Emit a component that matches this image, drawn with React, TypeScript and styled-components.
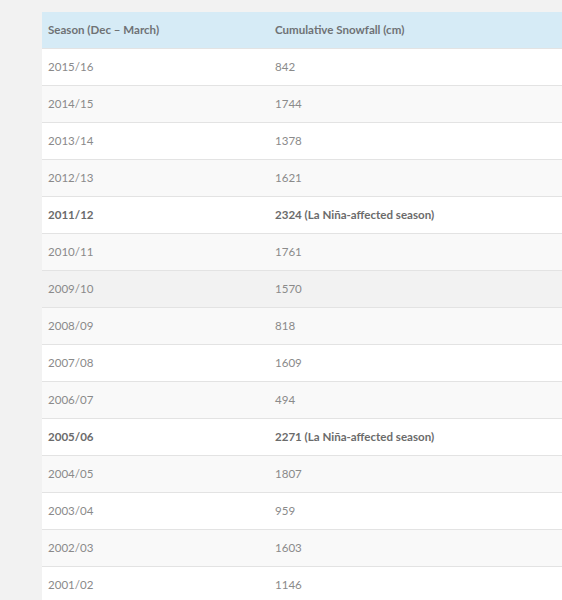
import React from "react";
import styled, { createGlobalStyle } from "styled-components";

const Global = createGlobalStyle`
  html, body { margin: 0; padding: 0; }
  body {
    background: #f2f2f2;
    font-family: Lato, "Open Sans", sans-serif;
    overflow: hidden;
  }
`;

const Page = styled.div`
  padding: 12px 0 0 42px;
  width: 620px;
`;

const Table = styled.table`
  width: 620px;
  table-layout: fixed;
  border-collapse: collapse;
  font-size: 11.55px;
  color: #888;
`;

const HeadCell = styled.th<{ $w?: number }>`
  background: #d6ebf6;
  color: #6f7275;
  font-weight: 700;
  text-align: left;
  height: 36px;
  padding: 0 6px;
  box-sizing: border-box;
  width: ${(p) => (p.$w ? `${p.$w}px` : "auto")};
`;

const Row = styled.tr<{ $bg: string }>`
  background: ${(p) => p.$bg};
  border-top: 1px solid #e3e3e3;
`;

const Cell = styled.td<{ $bold?: boolean }>`
  height: 37px;
  padding: 0 6px;
  box-sizing: border-box;
  font-weight: ${(p) => (p.$bold ? 700 : 400)};
  color: ${(p) => (p.$bold ? "#6b6b6b" : "#8a8a8a")};
`;

const data: [string, string, boolean?][] = [
  ["2015/16", "842"],
  ["2014/15", "1744"],
  ["2013/14", "1378"],
  ["2012/13", "1621"],
  ["2011/12", "2324 (La Niña-affected season)", true],
  ["2010/11", "1761"],
  ["2009/10", "1570"],
  ["2008/09", "818"],
  ["2007/08", "1609"],
  ["2006/07", "494"],
  ["2005/06", "2271 (La Niña-affected season)", true],
  ["2004/05", "1807"],
  ["2003/04", "959"],
  ["2002/03", "1603"],
  ["2001/02", "1146"],
];

export default function App() {
  return (
    <>
      <Global />
      <Page>
        <Table>
          <thead>
            <tr>
              <HeadCell $w={227}>Season (Dec – March)</HeadCell>
              <HeadCell>Cumulative Snowfall (cm)</HeadCell>
            </tr>
          </thead>
          <tbody>
            {data.map(([s, v, b], i) => (
              <Row key={s} $bg={i === 6 ? "#f2f2f2" : i % 2 === 1 ? "#f9f9f9" : "#ffffff"}>
                <Cell $bold={b}>{s}</Cell>
                <Cell $bold={b}>{v}</Cell>
              </Row>
            ))}
          </tbody>
        </Table>
      </Page>
    </>
  );
}
